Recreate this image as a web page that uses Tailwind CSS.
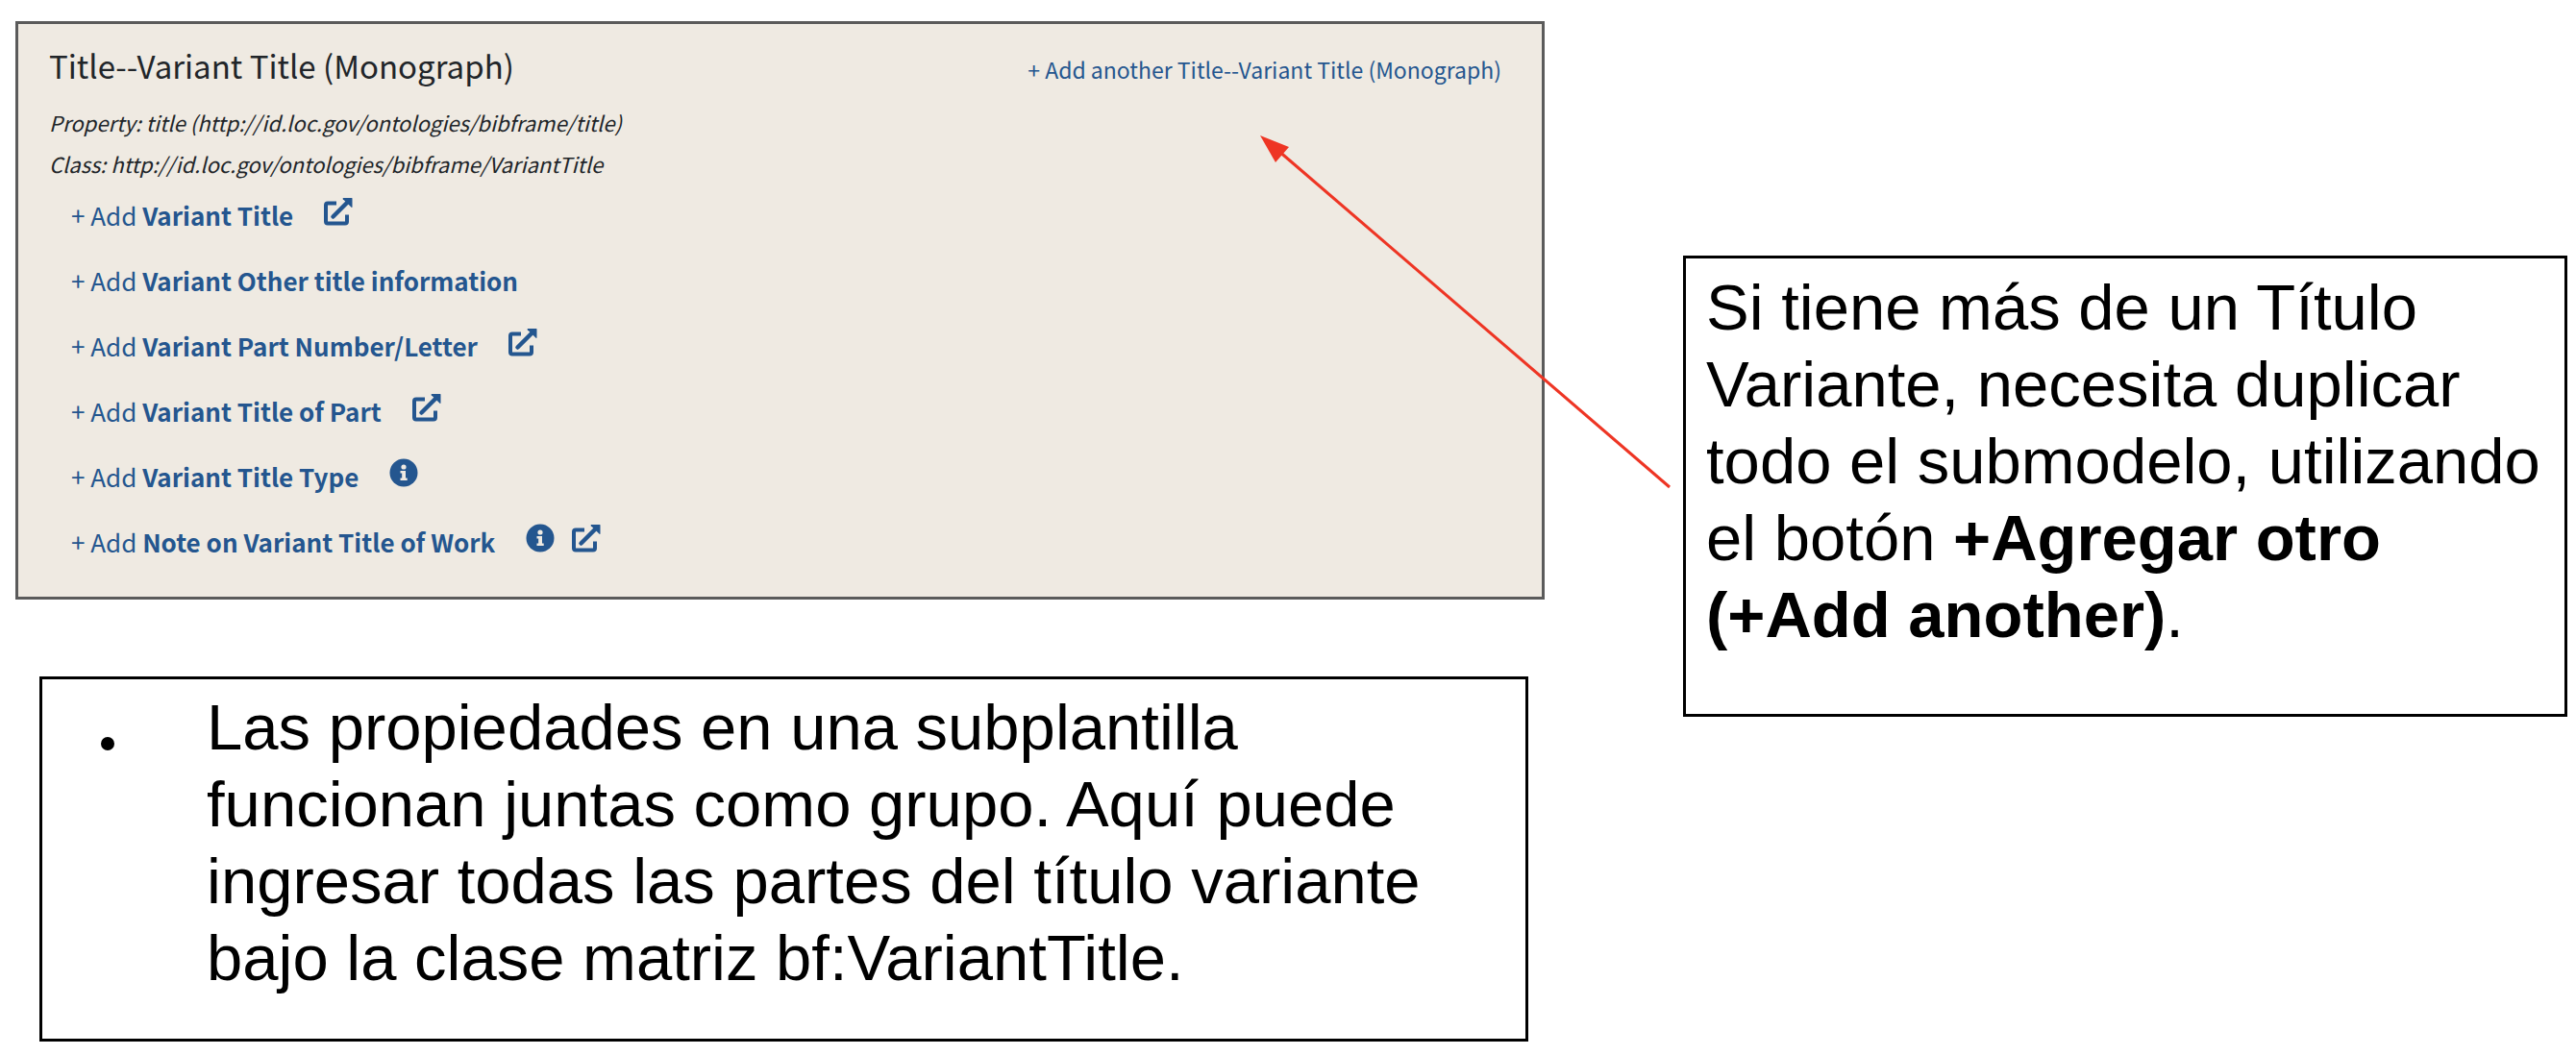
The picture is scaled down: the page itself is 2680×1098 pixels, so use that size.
<!DOCTYPE html>
<html lang="es">
<head>
<meta charset="utf-8">
<title>Title--Variant Title (Monograph)</title>
<script src="https://cdn.jsdelivr.net/npm/@tailwindcss/browser@4"></script>
</head>
<body class="bg-white text-black">
<svg class="hidden" aria-hidden="true">
  <symbol id="external" viewBox="0 0 30 30">
    <path d="M13 6.500H4Q2 6.500 2 8.500V25.500Q2 27.500 4 27.500H22Q24 27.500 24 25.500V18.500" fill="none" stroke="currentColor" stroke-width="4"/>
    <path d="M9.500 20.500L24 6" fill="none" stroke="currentColor" stroke-width="4.500" stroke-linecap="round"/>
    <path d="M20 1H29Q29.500 1 29.500 1.500V10.500Q29.300 11.300 28.600 10.800L19.800 2.200Q19.400 1.200 20 1Z" fill="currentColor"/>
  </symbol>
  <symbol id="info" viewBox="0 0 30 30">
    <circle cx="15" cy="15" r="14.500" fill="currentColor"/>
    <circle cx="15" cy="9" r="2.600" fill="#efeae2"/>
    <path d="M11.500 13H17V20.500H18.700V23H11.500V20.500H13.200V15.500H11.500Z" fill="#efeae2"/>
  </symbol>
</svg>
<main class="grid grid-cols-[1591fr_920fr] items-start gap-x-36 pt-[22px] pr-[9px] pl-4">
  <div>
    <section class="relative border-3 border-[#5b5b5b] bg-[#efeae2] pt-[19px] pr-[42px] pb-[23px] pl-8 font-['Noto_Sans_CJK_SC','Open_Sans',sans-serif] text-[#212529]">
      <header class="flex items-baseline justify-between">
        <h1 class="text-[33px] leading-[48px]">Title--Variant Title (Monograph)</h1>
        <button type="button" class="text-[23px] leading-[48px] text-[#24568f]">+ Add another Title--Variant Title (Monograph)</button>
      </header>
      <div class="mt-[10px] text-[22px] leading-[43px] italic">
        <p>Property: title (http://id.loc.gov/ontologies/bibframe/title)</p>
        <p>Class: http://id.loc.gov/ontologies/bibframe/VariantTitle</p>
      </div>
      <ul class="-mt-[2px] pl-[23px] text-[26px] leading-[68px] text-[#24568f]">
        <li class="flex items-baseline gap-8"><button type="button">+ Add <b>Variant Title</b></button><a href="#" aria-label="Open Variant Title"><svg class="inline-block size-[30px] align-baseline"><use href="#external"/></svg></a></li>
        <li class="flex items-baseline gap-8"><button type="button">+ Add <b>Variant Other title information</b></button></li>
        <li class="flex items-baseline gap-8"><button type="button">+ Add <b>Variant Part Number/Letter</b></button><a href="#" aria-label="Open Variant Part Number/Letter"><svg class="inline-block size-[30px] align-baseline"><use href="#external"/></svg></a></li>
        <li class="flex items-baseline gap-8"><button type="button">+ Add <b>Variant Title of Part</b></button><a href="#" aria-label="Open Variant Title of Part"><svg class="inline-block size-[30px] align-baseline"><use href="#external"/></svg></a></li>
        <li class="flex items-baseline gap-8"><button type="button">+ Add <b>Variant Title Type</b></button><button type="button" aria-label="About Variant Title Type"><svg class="inline-block size-[30px] align-baseline"><use href="#info"/></svg></button></li>
        <li class="flex items-baseline gap-8"><button type="button">+ Add <b>Note on Variant Title of Work</b></button><span class="flex items-baseline gap-[18px]"><button type="button" aria-label="About Note on Variant Title of Work"><svg class="inline-block size-[30px] align-baseline"><use href="#info"/></svg></button><a href="#" aria-label="Open Note on Variant Title of Work"><svg class="inline-block size-[30px] align-baseline"><use href="#external"/></svg></a></span></li>
      </ul>
      <svg class="pointer-events-none absolute top-[116px] -right-[137px] h-[370px] w-[430px]" viewBox="0 0 430 370" aria-hidden="true">
        <path d="M18 15L426 366" stroke="#ee3524" stroke-width="3"/>
        <path d="M0 0L30 12L16 28Z" fill="#ee3524"/>
      </svg>
    </section>
    <section class="mt-20 mr-[17px] ml-[25px] border-3 border-black pt-[10px] pb-11 pl-[61px] font-['Liberation_Sans',Arial,sans-serif] text-[67px] leading-[80px]">
      <ul>
        <li class="flex items-start"><span class="mt-[50px] mr-24 size-[14px] shrink-0 rounded-full bg-black"></span><p>Las propiedades en una subplantilla<br>funcionan juntas como grupo. Aquí puede<br>ingresar todas las partes del título variante<br>bajo la clase matriz bf:VariantTitle.</p></li>
      </ul>
    </section>
  </div>
  <aside class="mt-[244px] border-3 border-black pt-[11px] pb-[63px] pl-[21px] font-['Liberation_Sans',Arial,sans-serif] text-[67px] leading-[80px]">
    <p>Si tiene más de un Título<br>Variante, necesita duplicar<br>todo el submodelo, utilizando<br>el botón <b>+Agregar otro<br>(+Add another)</b>.</p>
  </aside>
</main>
</body>
</html>
